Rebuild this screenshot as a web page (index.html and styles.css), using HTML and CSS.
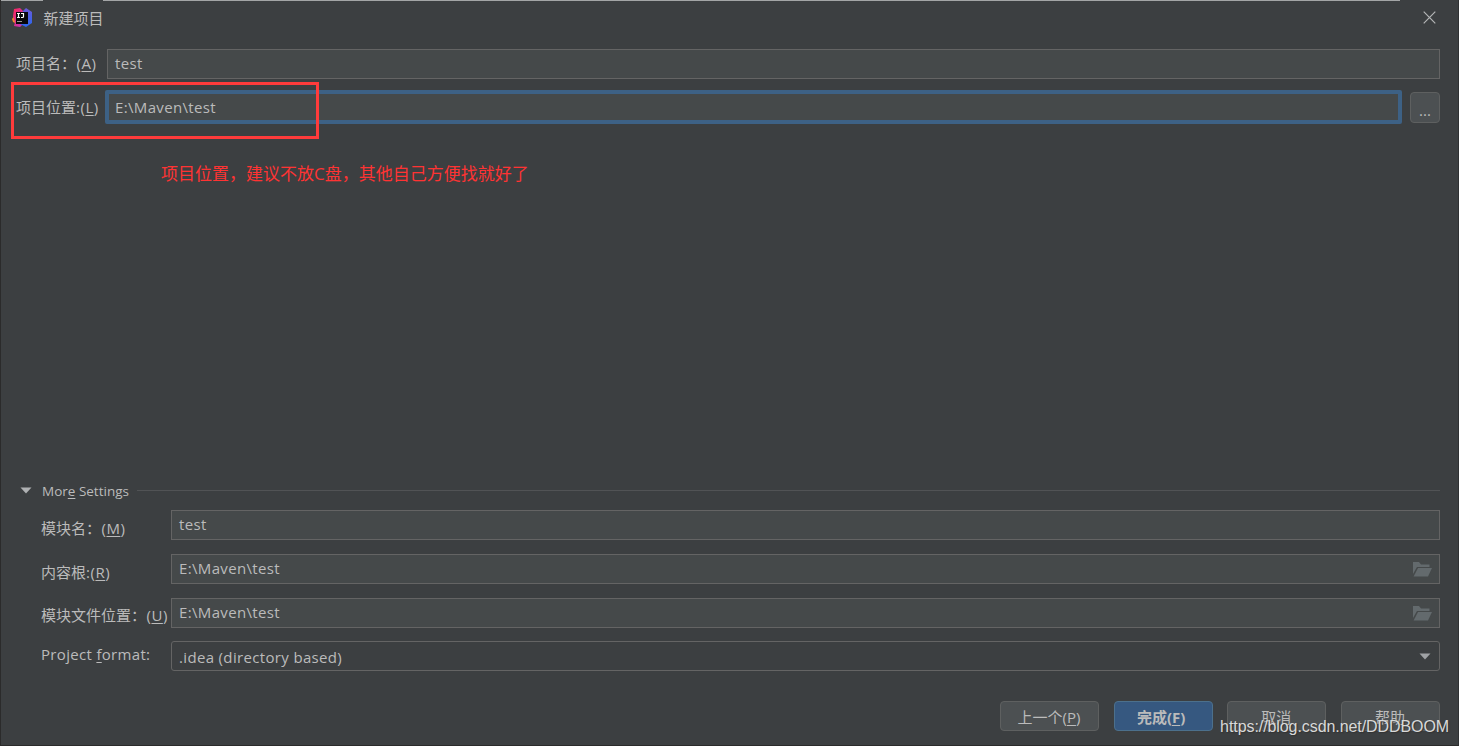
FILE: index.html
```
<!DOCTYPE html>
<html lang="zh-CN">
<head>
  <meta charset="UTF-8">
  <title>新建项目</title>
  <link rel="stylesheet" href="styles.css">
</head>
<body>
  <div class="dialog">
    <div class="titlebar">
      <svg class="logo" width="20" height="20" viewBox="0 0 20 20">
        <defs>
          <linearGradient id="pink" x1="0" y1="0" x2="1" y2="1">
            <stop offset="0" stop-color="#ff2859"/>
            <stop offset="1" stop-color="#b434c4"/>
          </linearGradient>
          <linearGradient id="blue" x1="0" y1="0" x2="0" y2="1">
            <stop offset="0" stop-color="#6c59d8"/>
            <stop offset="1" stop-color="#2868ef"/>
          </linearGradient>
        </defs>
        <path d="M0 11 3 7v8l-2-1z" fill="#f5862d"/>
        <path d="M2 1 8 0l4 4-1 12-3 3-6-1 1-4-2-6z" fill="url(#pink)"/>
        <path d="M11 3 14 0l6 4v11l-6 4-6-3z" fill="url(#blue)"/>
        <rect x="4" y="4" width="12" height="12" fill="#08080b"/>
        <path d="M5 5.500h3M6.500 5.500v4M5 9.500h3M9 5.500h2.500v3q0 1-1 1H9" fill="none" stroke="#fff" stroke-width="1.200"/>
        <path d="M5 13.500h5" stroke="#999"/>
      </svg>
      <span class="title">新建项目</span>
      <svg class="close" width="13" height="13" viewBox="0 0 13 13">
        <path d="M.7.7l11.600 11.600M12.300.7.7 12.300" stroke="#b4b6b7" stroke-width="1.200"/>
      </svg>
    </div>

    <div class="row">
      <label>项目名：<span class="key">(<u>A</u>)</span></label>
      <div class="field">test</div>
    </div>
    <div class="row location">
      <label>项目位置:<span class="key">(<u>L</u>)</span></label>
      <div class="field focused">E:\Maven\test</div>
      <div class="browse">...</div>
    </div>

    <div class="more">
      <svg width="12" height="7" viewBox="0 0 12 7"><path d="M.5.5h11L6 6.500z" fill="#afb1b3"/></svg>
      <span>Mor<u>e</u> Settings</span>
      <div class="line"></div>
    </div>

    <div class="settings">
      <label>模块名：<span class="key">(<u>M</u>)</span></label>
      <div class="field">test</div>

      <label>内容根:<span class="key">(<u>R</u>)</span></label>
      <div class="field">E:\Maven\test
        <svg class="folder" width="19" height="15" viewBox="0 0 19 15"><path d="M0 0h6l2 2.500h8.500V5H4L0 12z" fill="#636a6d"/><path d="M5 6h14l-4 8.500H.6z" fill="#636a6d"/></svg>
      </div>

      <label class="file-label">模块文件位置：<span class="key">(<u>U</u>)</span></label>
      <div class="field">E:\Maven\test
        <svg class="folder" width="19" height="15" viewBox="0 0 19 15"><path d="M0 0h6l2 2.500h8.500V5H4L0 12z" fill="#636a6d"/><path d="M5 6h14l-4 8.500H.6z" fill="#636a6d"/></svg>
      </div>

      <label class="format-label">Project <u>f</u>ormat:</label>
      <div class="field select">.idea (directory based)
        <svg class="arrow" width="12" height="7" viewBox="0 0 12 7"><path d="M.5.500h11L6 6.500z" fill="#9fa2a5"/></svg>
      </div>
    </div>

    <div class="buttons">
      <div class="btn">上一个(<u>P</u>)</div>
      <div class="btn primary">完成(<u>F</u>)</div>
      <div class="btn">取消</div>
      <div class="btn">帮助</div>
    </div>
  </div>

  <!-- notes over the dialog -->
  <div class="mark"></div>
  <div class="note">项目位置，建议不放C盘，其他自己方便找就好了</div>
  <div class="watermark">https://blog.csdn.net/DDDBOOM</div>
</body>
</html>
```

FILE: styles.css
```
* {
  box-sizing: border-box;
}
body {
  margin: 0;
  height: 746px;
  overflow: hidden;
  position: relative;
  background: #3c3f41;
  color: #bbbbbb;
  font-family: "Open Sans", "Noto Sans CJK SC", sans-serif;
  font-size: 15px;
  line-height: 20px;
  white-space: nowrap;
}
.dialog {
  height: 746px;
  padding: 0 18px 0 15px;
  border-left: 1px solid #2b2b2b;
  border-right: 1px solid #2f3133;
  border-bottom: 1px solid #2b2b2b;
  background: linear-gradient(90deg, #a3a5a6 42px, #3c3f41 42px, #3c3f41 102px, #a3a5a6 102px, #a3a5a6 1399px, #3c3f41 1399px) 0 0 / 100% 1px no-repeat;
}
u {
  text-underline-offset: 2px;
  text-decoration-thickness: 1px;
}
.titlebar {
  display: flex;
  align-items: center;
  height: 36px;
  margin-left: -4px;
}
.title {
  margin: -1px 0 0 11.5px;
}
.close {
  margin: -1px 4.5px 0 auto;
}
.row {
  display: flex;
  align-items: center;
  height: 30px;
  margin-top: 13px;
}
.row label {
  width: 91px;
  padding-bottom: 2px;
}
.location {
  height: 34px;
  margin-top: 11px;
}
.location label {
  width: 89px;
  padding-bottom: 0;
}
.key {
  margin-left: 0.5px;
  letter-spacing: 0.5px;
}
.field {
  flex: 1;
  display: flex;
  align-items: center;
  height: 30px;
  padding: 0 7px 2px 7px;
  border: 1px solid #646464;
  background: #45494a;
  letter-spacing: 0.34px;
}
.row .focused {
  height: 34px;
  padding: 0 0 0 6px;
  border: 4px solid #3d6185;
  border-radius: 2px;
}
.browse {
  width: 30px;
  height: 31px;
  margin: 1px 0 0 8px;
  padding-top: 7px;
  border: 1px solid #5e6060;
  border-radius: 4px;
  background: #4c5052;
  text-align: center;
}
.more {
  display: flex;
  align-items: center;
  height: 20px;
  margin: 356px 0 10px 4px;
  font-size: 13.5px;
}
.more span {
  margin: 2px 8px 0 10px;
}
.line {
  flex: 1;
  height: 1px;
  background: #515355;
}
.settings {
  display: grid;
  grid-template-columns: 130px 1fr;
  grid-auto-rows: 30px;
  row-gap: 13.8px;
  align-items: center;
  margin-left: 25px;
}
.settings label {
  padding-top: 6px;
}
.settings .file-label {
  padding-top: 5px;
}
.settings .format-label {
  padding: 0 0 4px;
  letter-spacing: 0.32px;
}
.folder,
.arrow {
  margin-left: auto;
}
.folder {
  margin-top: 4px;
}
.settings .select {
  padding: 1px 8px 0 7px;
  border-radius: 3px;
  background: #3c3f41;
}
.buttons {
  display: flex;
  justify-content: flex-end;
  gap: 14.7px;
  margin-top: 29.6px;
}
.btn {
  width: 99px;
  height: 30px;
  padding: 5px 1px 0 0;
  border: 1px solid #5e6060;
  border-radius: 4px;
  background: #4c5052;
  text-align: center;
}
.primary {
  padding-right: 4px;
  border-color: #4c708c;
  background: #365880;
  font-weight: bold;
}
.mark {
  position: absolute;
  left: 11px;
  top: 82px;
  width: 308px;
  height: 57px;
  border: 3px solid #ff3b3b;
}
.note {
  position: absolute;
  left: 161px;
  top: 164px;
  color: #f33;
  font-size: 17px;
}
.watermark {
  position: absolute;
  right: 10px;
  top: 717px;
  color: #d8d9d9;
  font-family: "Liberation Sans", sans-serif;
  font-size: 16px;
  letter-spacing: -0.08px;
  text-shadow: 1px 1px 1px #333;
}
```
